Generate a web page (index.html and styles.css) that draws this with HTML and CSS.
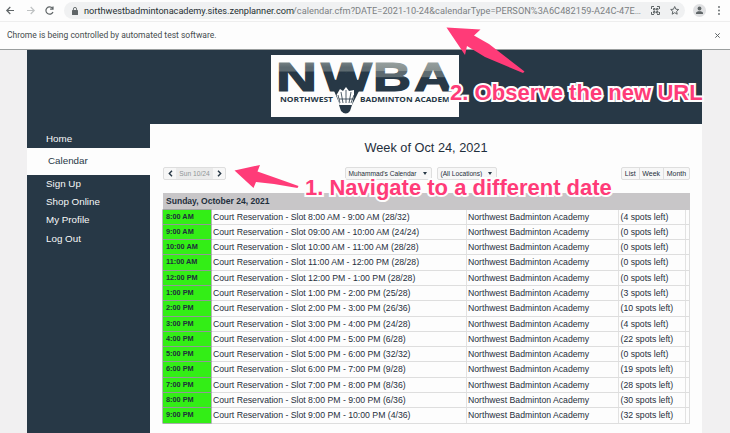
FILE: index.html
```html
<!DOCTYPE html>
<html lang="en">
<head>
<meta charset="utf-8">
<title>Northwest Badminton Academy</title>
<link rel="stylesheet" href="styles.css">
</head>
<body>
<header class="toolbar">
  <svg class="nav-icons" width="64" height="21" viewBox="0 0 64 21" fill="none" stroke-width="1.2">
    <path d="M14 10.5H7M10.3 7L6.8 10.5L10.3 14" stroke="#5f6567"/>
    <path d="M27 10.5H34M30.7 7L34.2 10.5L30.7 14" stroke="#bfc2c3"/>
    <path d="M52.5 8.2A3.7 3.7 0 1 0 53 12M53 6.5V9.2H50.1" stroke="#5f6567"/>
  </svg>
  <div class="address">
    <svg class="lock" width="6" height="8" viewBox="0 0 6 8"><rect y="3" width="6" height="5" rx=".6" fill="#5f6567"/><path d="M1.4 3V2a1.6 1.6 0 0 1 3.2 0v1" fill="none" stroke="#5f6567" stroke-width=".9"/></svg>
    <span class="domain">northwestbadmintonacademy.sites.zenplanner.com</span><span class="path">/calendar.cfm?DATE=2021-10-24&amp;calendarType=PERSON%3A6C482159-A24C-47E…</span>
  </div>
  <svg class="tool-icons" width="90" height="21" viewBox="0 0 90 21" fill="none" stroke="#5f6567">
    <path d="M11.500 9V6.500H14M17 6.500h2.500V9M19.500 12v2.500H17M14 14.500h-2.500V12M13.500 8.500h1.500v1.500h-1.500zM16.500 8.500H18V10h-1.500zM13.500 11.500H15V13h-1.500zM16.500 11.500H18V13h-1.500z"/>
    <path d="M34.700 6.500L35.900 9.200L38.700 9.500L36.600 11.400L37.200 14.200L34.700 12.700L32.200 14.200L32.800 11.400L30.700 9.500L33.500 9.200Z"/>
    <circle cx="59.500" cy="10.500" r="6.500" fill="#dfe0e2" stroke="none"/>
    <circle cx="59.500" cy="8.500" r="1.900" fill="#5f6567" stroke="none"/>
    <path d="M56 14v-1c0-2.400 7-2.400 7 0v1z" fill="#5f6567" stroke="none"/>
    <g fill="#5f6567" stroke="none"><circle cx="79" cy="7" r=".9"/><circle cx="79" cy="10.500" r=".9"/><circle cx="79" cy="14" r=".9"/></g>
  </svg>
</header>
<div class="infobar">
  <span>Chrome is being controlled by automated test software.</span>
  <svg width="5" height="5" viewBox="0 0 5 5"><path d="M.3 .3L4.700 4.700M4.700 .3L.3 4.700" stroke="#5f6567"/></svg>
</div>
<main class="site">
  <div class="banner">
    <svg class="logo" width="188" height="62" viewBox="0 0 188 62">
      <defs>
        <linearGradient id="metal" gradientUnits="userSpaceOnUse" x1="0" y1="6" x2="0" y2="37">
          <stop offset="0" stop-color="#98a19f"/><stop offset=".32" stop-color="#858f8f"/>
          <stop offset=".34" stop-color="#5d6a70"/><stop offset=".5" stop-color="#5d6a70"/>
          <stop offset=".54" stop-color="#273846"/><stop offset="1" stop-color="#273846"/>
        </linearGradient>
        <linearGradient id="metal-dark" gradientUnits="userSpaceOnUse" x1="0" y1="6" x2="0" y2="37">
          <stop offset="0" stop-color="#7c8788"/><stop offset=".2" stop-color="#5d6a70"/>
          <stop offset=".32" stop-color="#5d6a70"/><stop offset=".36" stop-color="#273846"/>
          <stop offset="1" stop-color="#273846"/>
        </linearGradient>
      </defs>
      <rect width="188" height="62" fill="#fdfdfd"/>
      <g class="logo-big" stroke-width="1.200">
        <text x="5" y="36" textLength="41" lengthAdjust="spacingAndGlyphs" fill="url(#metal-dark)" stroke="url(#metal-dark)">N</text>
        <text x="50" y="36" textLength="51" lengthAdjust="spacingAndGlyphs" fill="url(#metal-dark)" stroke="url(#metal-dark)">W</text>
        <text x="102" y="36" textLength="38" lengthAdjust="spacingAndGlyphs" fill="url(#metal)" stroke="url(#metal)">B</text>
        <text x="143" y="36" textLength="38" lengthAdjust="spacingAndGlyphs" fill="url(#metal)" stroke="url(#metal)">A</text>
      </g>
      <path d="M58 24L69 50H81L94 24L86 25L76 17L66 25Z" fill="url(#metal-dark)"/>
      <path d="M65.500 40L69 34L72 36L75 32L78 36L83 35V41L81 50H69Z" fill="#fdfdfd"/>
      <path d="M69 48L67 40M72 48L70 37M75 48V35M78 48L80 37M80 48L83 40M68 44h14" stroke="#273846" stroke-width=".8"/>
      <path d="M68 50H81L79 56Q75 61 70 56Z" fill="#273846"/>
      <g class="logo-small" fill="#273846">
        <text x="9" y="47" textLength="53" lengthAdjust="spacingAndGlyphs">NORTHWEST</text>
        <text x="89" y="47" textLength="95" lengthAdjust="spacingAndGlyphs">BADMINTON ACADEMY</text>
      </g>
    </svg>
  </div>
  <div class="columns">
    <nav class="menu">
      <a>Home</a><a class="active">Calendar</a><a>Sign Up</a><a>Shop Online</a><a>My Profile</a><a>Log Out</a>
    </nav>
    <section class="content">
      <h1>Week of Oct 24, 2021</h1>
      <div class="controls">
        <div class="group stepper">
          <b><svg width="5" height="7" viewBox="0 0 5 7"><path d="M4 .7L1.300 3.500L4 6.300"/></svg></b><span>Sun 10/24</span><b><svg width="5" height="7" viewBox="0 0 5 7"><path d="M1 .7L3.700 3.500L1 6.300"/></svg></b>
        </div>
        <div class="selects">
          <div class="group select person">Muhammad's Calendar<i></i></div>
          <div class="group select place">(All Locations)<i></i></div>
        </div>
        <div class="group views"><span>List</span><span>Week</span><span>Month</span></div>
      </div>
      <div class="schedule">
        <div class="day">Sunday, October 24, 2021</div>
        <div class="row"><b>8:00 AM</b><span>Court Reservation - Slot 8:00 AM - 9:00 AM (28/32)</span><span>Northwest Badminton Academy</span><span>(4 spots left)</span><i></i></div>
        <div class="row"><b>9:00 AM</b><span>Court Reservation - Slot 09:00 AM - 10:00 AM (24/24)</span><span>Northwest Badminton Academy</span><span>(0 spots left)</span><i></i></div>
        <div class="row"><b>10:00 AM</b><span>Court Reservation - Slot 10:00 AM - 11:00 AM (28/28)</span><span>Northwest Badminton Academy</span><span>(0 spots left)</span><i></i></div>
        <div class="row"><b>11:00 AM</b><span>Court Reservation - Slot 11:00 AM - 12:00 PM (28/28)</span><span>Northwest Badminton Academy</span><span>(0 spots left)</span><i></i></div>
        <div class="row"><b>12:00 PM</b><span>Court Reservation - Slot 12:00 PM - 1:00 PM (28/28)</span><span>Northwest Badminton Academy</span><span>(0 spots left)</span><i></i></div>
        <div class="row"><b>1:00 PM</b><span>Court Reservation - Slot 1:00 PM - 2:00 PM (25/28)</span><span>Northwest Badminton Academy</span><span>(3 spots left)</span><i></i></div>
        <div class="row"><b>2:00 PM</b><span>Court Reservation - Slot 2:00 PM - 3:00 PM (26/36)</span><span>Northwest Badminton Academy</span><span>(10 spots left)</span><i></i></div>
        <div class="row"><b>3:00 PM</b><span>Court Reservation - Slot 3:00 PM - 4:00 PM (24/28)</span><span>Northwest Badminton Academy</span><span>(4 spots left)</span><i></i></div>
        <div class="row"><b>4:00 PM</b><span>Court Reservation - Slot 4:00 PM - 5:00 PM (6/28)</span><span>Northwest Badminton Academy</span><span>(22 spots left)</span><i></i></div>
        <div class="row"><b>5:00 PM</b><span>Court Reservation - Slot 5:00 PM - 6:00 PM (32/32)</span><span>Northwest Badminton Academy</span><span>(0 spots left)</span><i></i></div>
        <div class="row"><b>6:00 PM</b><span>Court Reservation - Slot 6:00 PM - 7:00 PM (9/28)</span><span>Northwest Badminton Academy</span><span>(19 spots left)</span><i></i></div>
        <div class="row"><b>7:00 PM</b><span>Court Reservation - Slot 7:00 PM - 8:00 PM (8/36)</span><span>Northwest Badminton Academy</span><span>(28 spots left)</span><i></i></div>
        <div class="row"><b>8:00 PM</b><span>Court Reservation - Slot 8:00 PM - 9:00 PM (6/36)</span><span>Northwest Badminton Academy</span><span>(30 spots left)</span><i></i></div>
        <div class="row"><b>9:00 PM</b><span>Court Reservation - Slot 9:00 PM - 10:00 PM (4/36)</span><span>Northwest Badminton Academy</span><span>(32 spots left)</span><i></i></div>
      </div>
    </section>
  </div>
</main>
<svg class="arrows" width="730" height="433" viewBox="0 0 730 433" fill="#ff3b78">
  <path d="M446.500 27.500L480.500 29.500L474 35.500L489 44L524.500 71.500L523 73L485 57L467 46L465 55Z"/>
  <path d="M234.500 170.500L260 165L257.500 171.500L276 178L298.500 186L297.500 188L274 184L256 182L253.500 188Z"/>
</svg>
<div class="note note-url">2. Observe the new URL</div>
<div class="note note-date">1. Navigate to a different date</div>
</body>
</html>
```
FILE: styles.css
```css
* { box-sizing: border-box; }
body {
  margin: 0;
  width: 730px;
  height: 433px;
  overflow: hidden;
  position: relative;
  background: #f1f0f1;
  color: #1f2f3c;
  font-family: "Liberation Sans", Arial, sans-serif;
}
svg { display: block; flex: none; }
.toolbar { display: flex; height: 22px; background: #fdfdfd; border-bottom: 1px solid #eee; }
.address {
  display: flex;
  align-items: center;
  width: 621px;
  flex: none;
  height: 17px;
  margin-top: 2px;
  padding-left: 8px;
  border-radius: 9px;
  background: #f0f1f2;
  font: 9.2px/17px Roboto, sans-serif;
  white-space: nowrap;
  color: #7b8082;
}
.lock { margin-right: 6px; }
.domain { width: 209px; color: #273033; letter-spacing: -.03px; }
.path { letter-spacing: .05px; }
.tool-icons { margin-left: -45px; }
.infobar {
  display: flex;
  align-items: center;
  justify-content: space-between;
  height: 28px;
  padding: 0 10px 0 7px;
  background: #fdfdfd;
  border-bottom: 1px solid #9a9e9e;
  font: 8.5px/27px Roboto, sans-serif;
  color: #454b4d;
}
.site { width: 675px; height: 383px; margin-left: 27px; background: #273846; }
.banner { display: flex; justify-content: center; height: 74px; padding: 5px 0 0 1px; }
.columns { display: flex; height: 309px; }
.menu { width: 123px; flex: none; padding-top: 6px; font-size: 9.8px; }
.menu a { display: block; height: 18.3px; line-height: 18.3px; padding-left: 19px; color: #f6f7f7; }
.menu a.active { height: 26.5px; line-height: 26px; padding-left: 21px; background: #fdfdfd; color: #273846; }
.content { flex: 1; padding: 0 12px 0 13px; background: #fdfdfd; }
h1 { margin: 0 1px 0 0; padding-top: 16px; font-size: 12.75px; font-weight: 400; line-height: 16px; text-align: center; }
.controls { display: flex; align-items: center; justify-content: space-between; height: 15px; margin-top: 10px; }
.group {
  display: flex;
  align-items: center;
  height: 13px;
  background: #f7f7f7;
  border: 1px solid #dedede;
  border-radius: 2px;
  font-size: 7px;
  white-space: nowrap;
}
.stepper { width: 63px; }
.stepper b { display: flex; justify-content: center; width: 12px; }
.stepper path { fill: none; stroke: #273846; stroke-width: 1.4; }
.stepper span { flex: 1; font-size: 6.7px; line-height: 11px; text-align: center; background: #ebebeb; color: #909596; }
.selects { display: flex; gap: 5px; margin-left: -6px; }
.select { justify-content: space-between; padding: 0 4px 0 3px; font-size: 6.6px; }
.select i { border: 2.5px solid transparent; border-top: 3px solid #273846; border-bottom: 0; }
.person { width: 87px; }
.place { width: 60px; }
.views { width: 69px; }
.views span { flex: 1 1 auto; line-height: 11px; text-align: center; }
.views span + span { border-left: 1px solid #dedede; }
.schedule { width: 527px; margin-top: 12px; }
.day { height: 16.5px; padding-left: 3px; background: #c8c6c8; font-size: 8.55px; font-weight: 700; line-height: 17px; }
.row {
  display: grid;
  grid-template-columns: 48.5px 255px 152.5px 67px 4px;
  height: 15.3px;
  border-bottom: 1px solid #dedede;
  font-size: 8.7px;
  line-height: 14.3px;
  white-space: nowrap;
}
.row b { margin-right: 1px; padding-left: 3px; background: #33ee16; font-size: 7.3px; box-shadow: 0 0 0 .6px #858c8a; }
.row span { padding-left: 1.5px; border-right: 1px solid #e2e2e2; }
.row i { border-right: 1px solid #dedede; }
.logo-big { font: 700 40px "Liberation Sans", sans-serif; }
.logo-small { font: 700 6.6px "Open Sans", sans-serif; }
.arrows { position: absolute; left: 0; top: 0; }
.note {
  position: absolute;
  color: #ff3b78;
  font-size: 22px;
  font-weight: 700;
  line-height: 26px;
  white-space: nowrap;
  -webkit-text-stroke: 4px #fdfdfd;
  paint-order: stroke fill;
}
.note-url { left: 450px; top: 80px; letter-spacing: .04px; }
.note-date { left: 305px; top: 175px; }
```
